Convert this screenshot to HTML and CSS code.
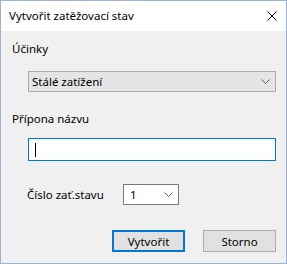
FILE: index.html
```html
<!DOCTYPE html>
<html lang="cs">
<head>
<meta charset="utf-8">
<link rel="stylesheet" href="styles.css">
</head>
<body>
<div class="window">
  <div class="titlebar">
    <span class="title">Vytvořit zatěžovací stav</span>
    <svg class="close" width="10" height="10" viewBox="0 0 10 10"><path d="M0.5 0.5 L9.5 9.5 M9.5 0.5 L0.5 9.5" stroke="#000" stroke-width="1" fill="none"/></svg>
  </div>
  <div class="content">
    <div class="label l1">Účinky</div>
    <div class="combo">
      <span>Stálé zatížení</span>
      <svg class="chev" width="9" height="5" viewBox="0 0 9 5"><path d="M0.5 0.5 L4.5 4.5 L8.5 0.5" stroke="#606060" fill="none"/></svg>
    </div>
    <div class="label l2">Přípona názvu</div>
    <div class="input"><span class="caret"></span></div>
    <div class="row">
      <span class="rowlabel">Číslo zať.stavu</span>
      <div class="select">
        <span>1</span>
        <svg class="chev" width="9" height="5" viewBox="0 0 9 5"><path d="M0.5 0.5 L4.5 4.5 L8.5 0.5" stroke="#606060" fill="none"/></svg>
      </div>
    </div>
    <div class="buttons">
      <div class="btn default">Vytvořit</div>
      <div class="btn">Storno</div>
    </div>
  </div>
</div>
</body>
</html>
```
FILE: styles.css
```css
html, body {
  margin: 0;
  padding: 0;
  background: #f0f0f0;
}
body {
  font-family: "Noto Sans", "Segoe UI", sans-serif;
  font-size: 11.5px;
  color: #000;
}
.window {
  width: 287px;
  height: 264px;
  box-sizing: border-box;
  border: 1px solid #9fb2d6;
  background: #f0f0f0;
  display: flex;
  flex-direction: column;
}
.titlebar {
  height: 30px;
  background: #fff;
  display: flex;
  align-items: center;
  justify-content: space-between;
  padding: 0 9px 0 8px;
  flex: none;
}
.title {
  line-height: 16px;
}
.close {
  display: block;
}
.content {
  display: flex;
  flex-direction: column;
  padding-left: 11px;
}
.label {
  line-height: 16px;
}
.l1 {
  margin-top: 10px;
}
.combo {
  margin: 14px 0 0 16px;
  width: 248px;
  height: 21px;
  box-sizing: border-box;
  background: #e5e5e5;
  border: 1px solid #acacac;
  display: flex;
  align-items: center;
  justify-content: space-between;
  padding: 0 5px 0 3px;
}
.l2 {
  margin-top: 19px;
}
.input {
  margin: 11px 0 0 16px;
  width: 248px;
  height: 23px;
  box-sizing: border-box;
  background: #fff;
  border: 1px solid #0078d7;
  display: flex;
  align-items: center;
  padding-left: 6px;
}
.caret {
  width: 1px;
  height: 14px;
  background: #000;
}
.row {
  margin-top: 23px;
  display: flex;
  align-items: center;
  padding-left: 15px;
}
.rowlabel {
  width: 96px;
}
.select {
  width: 56px;
  height: 21px;
  box-sizing: border-box;
  background: #fff;
  border: 1px solid #7a7a7a;
  display: flex;
  align-items: center;
  justify-content: space-between;
  padding: 0 5px 0 6px;
}
.buttons {
  margin-top: 25px;
  display: flex;
  gap: 18px;
  padding-left: 100px;
}
.btn {
  width: 73px;
  height: 22px;
  box-sizing: border-box;
  background: #e1e1e1;
  border: 1px solid #adadad;
  display: flex;
  align-items: center;
  justify-content: center;
}
.btn.default {
  border: 2px solid #0078d7;
}
```
